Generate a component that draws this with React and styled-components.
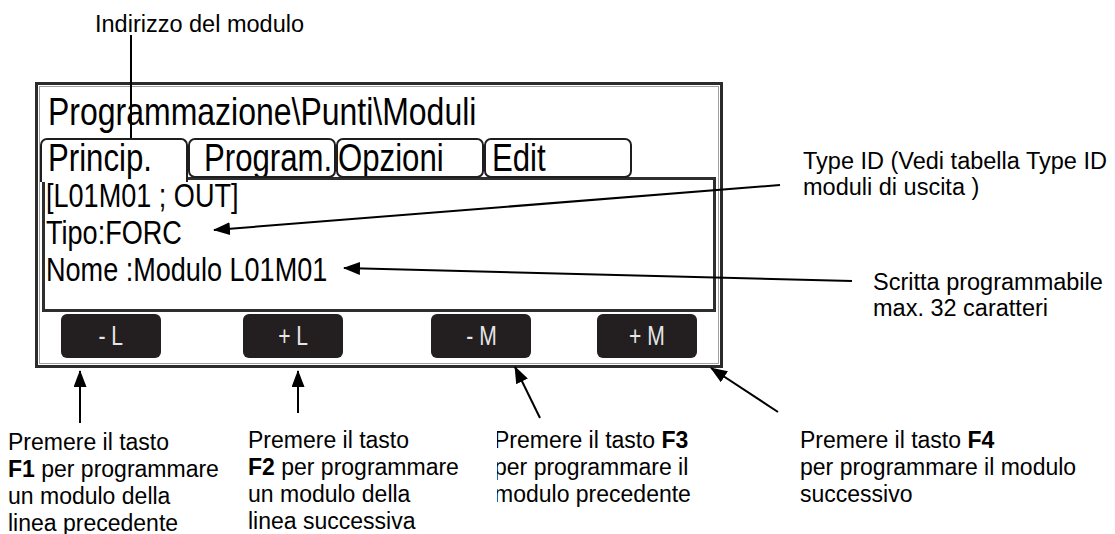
import React from "react";
import styled, { createGlobalStyle } from "styled-components";

const GlobalStyle = createGlobalStyle`
  html, body { margin: 0; padding: 0; background: #fff; }
  body { width: 1115px; height: 534px; overflow: hidden; }
`;

// page
const Page = styled.div`
  position: relative;
  width: 1115px;
  height: 534px;
  overflow: hidden;
  background: #fff;
  color: #000;
  font-family: "Liberation Sans", Arial, sans-serif;
`;

const TopLabel = styled.div`
  height: 82px;
  box-sizing: border-box;
  padding: 11px 0 0 95px;
  font-size: 23.5px;
  line-height: 27px;
`;

// condensed lettering of the display (no narrow font installed)
const Narrow = styled.span`
  display: inline-block;
  white-space: pre;
  transform: scaleX(${(p) => p.$sx || 0.82});
  transform-origin: ${(p) => p.$origin || "left"} center;
`;

// the display
const Screen = styled.div`
  margin-left: 35px;
  width: 688px;
  height: 286px;
  box-sizing: border-box;
  border: 3px solid #2b2b2b;
  box-shadow: inset 0 0 0 1px #fff, inset 0 0 0 2px #a0a0a0;
  display: flex;
  flex-direction: column;
  padding: 0 4px 7px 2px;
`;

const Title = styled.div`
  height: 53px;
  padding-left: 8px;
  font-size: 39px;
  line-height: 53px;
  white-space: nowrap;
`;

const TabBar = styled.div`
  display: flex;
  height: 40px;
  margin-bottom: -1px;
  position: relative;
  z-index: 1;
`;

const Tab = styled.div`
  width: 148px;
  height: ${(p) => (p.$active ? "44px" : "40px")};
  box-sizing: border-box;
  border: 2px solid #1e1e1e;
  border-bottom: ${(p) => (p.$active ? "none" : "2px solid #1e1e1e")};
  border-radius: ${(p) => (p.$active ? "7px 7px 0 0" : "7px")};
  background: #fff;
  padding-left: ${(p) => p.$pad}px;
  font-size: 38px;
  line-height: 37px;
  white-space: nowrap;
  overflow: hidden;
`;

const Content = styled.div`
  margin-left: 2px;
  height: 135px;
  box-sizing: border-box;
  border: 3px solid #2e2e2e;
  padding: 0 0 0 1px;
  font-size: 33px;
  line-height: 37px;
`;

const Lines = styled.div`
  margin-top: -3px;
  display: flex;
  flex-direction: column;
  align-items: flex-start;
`;

const KeyRow = styled.div`
  display: flex;
  height: 44px;
  margin-top: 2px;
`;

const Key = styled.div`
  width: 100px;
  margin-left: ${(p) => p.$gap}px;
  border-radius: 6px;
  background: #231f20;
  color: #e6e6e6;
  font-size: 27px;
  line-height: 44px;
  text-align: center;
`;

// captions under the display
const Captions = styled.div`
  display: grid;
  grid-template-columns: 240px 249px 303px auto;
  padding-left: 8px;
  margin-top: 59px;
  font-size: 23px;
  line-height: 27px;
`;

const Caption = styled.div`
  margin-top: ${(p) => p.$shift || 0}px;
  white-space: nowrap;
  overflow: hidden;
`;

const Clipped = styled.div`
  margin-left: -3px;
`;

// callouts on the right
const Callout = styled.div`
  position: absolute;
  left: ${(p) => p.$x}px;
  top: ${(p) => p.$y}px;
  font-size: 23.5px;
  line-height: 26px;
  white-space: nowrap;
`;

const Arrows = styled.svg`
  position: absolute;
  left: 0;
  top: 0;
  pointer-events: none;
`;

const arrows = [
  [131, 35, 131, 176],
  [780, 185, 214, 230],
  [852, 281, 344, 268],
  [80, 423, 80, 371],
  [298, 413, 298, 371],
  [540, 418, 515, 367],
  [778, 412, 711, 368],
];

const tabs = [
  { label: "Princip.", pad: 6, active: true },
  { label: "Program.", pad: 14 },
  { label: "Opzioni", pad: 0 },
  { label: "Edit", pad: 6 },
];

const keys = [
  { label: "- L", gap: 21 },
  { label: "+ L", gap: 82 },
  { label: "- M", gap: 88 },
  { label: "+ M", gap: 66 },
];

export default function App() {
  return (
    <Page>
      <GlobalStyle />
      <TopLabel>Indirizzo del modulo</TopLabel>

      <Screen>
        <Title>
          <Narrow>Programmazione\Punti\Moduli</Narrow>
        </Title>
        <TabBar>
          {tabs.map((t) => (
            <Tab key={t.label} $active={t.active} $pad={t.pad}>
              <Narrow>{t.label}</Narrow>
            </Tab>
          ))}
        </TabBar>
        <Content>
          <Lines>
            <Narrow>[L01M01 ; OUT]</Narrow>
            <Narrow>Tipo:FORC</Narrow>
            <Narrow>Nome :Modulo L01M01</Narrow>
          </Lines>
        </Content>
        <KeyRow>
          {keys.map((k) => (
            <Key key={k.label} $gap={k.gap}>
              <Narrow $sx={0.78} $origin="center">
                {k.label}
              </Narrow>
            </Key>
          ))}
        </KeyRow>
      </Screen>

      <Captions>
        <Caption $shift={2}>
          Premere il tasto
          <br />
          <b>F1</b> per programmare
          <br />
          un modulo della
          <br />
          linea precedente
        </Caption>
        <Caption>
          Premere il tasto
          <br />
          <b>F2</b> per programmare
          <br />
          un modulo della
          <br />
          linea successiva
        </Caption>
        <Caption>
          <Clipped>
            Premere il tasto <b>F3</b>
            <br />
            per programmare il
            <br />
            modulo precedente
          </Clipped>
        </Caption>
        <Caption>
          Premere il tasto <b>F4</b>
          <br />
          per programmare il modulo
          <br />
          successivo
        </Caption>
      </Captions>

      <Callout $x={803} $y={148}>
        Type ID (Vedi tabella Type ID
        <br />
        moduli di uscita )
      </Callout>
      <Callout $x={873} $y={269}>
        Scritta programmabile
        <br />
        max. 32 caratteri
      </Callout>

      <Arrows width="1115" height="534" viewBox="0 0 1115 534">
        <defs>
          <marker
            id="head"
            markerUnits="userSpaceOnUse"
            markerWidth="17"
            markerHeight="13"
            refX="16"
            refY="6.5"
            orient="auto"
          >
            <path d="M0,0 L17,6.5 L0,13 z" fill="#000" />
          </marker>
        </defs>
        {arrows.map(([x1, y1, x2, y2], i) => (
          <line
            key={i}
            x1={x1}
            y1={y1}
            x2={x2}
            y2={y2}
            stroke="#000"
            strokeWidth="2"
            markerEnd="url(#head)"
          />
        ))}
      </Arrows>
    </Page>
  );
}
